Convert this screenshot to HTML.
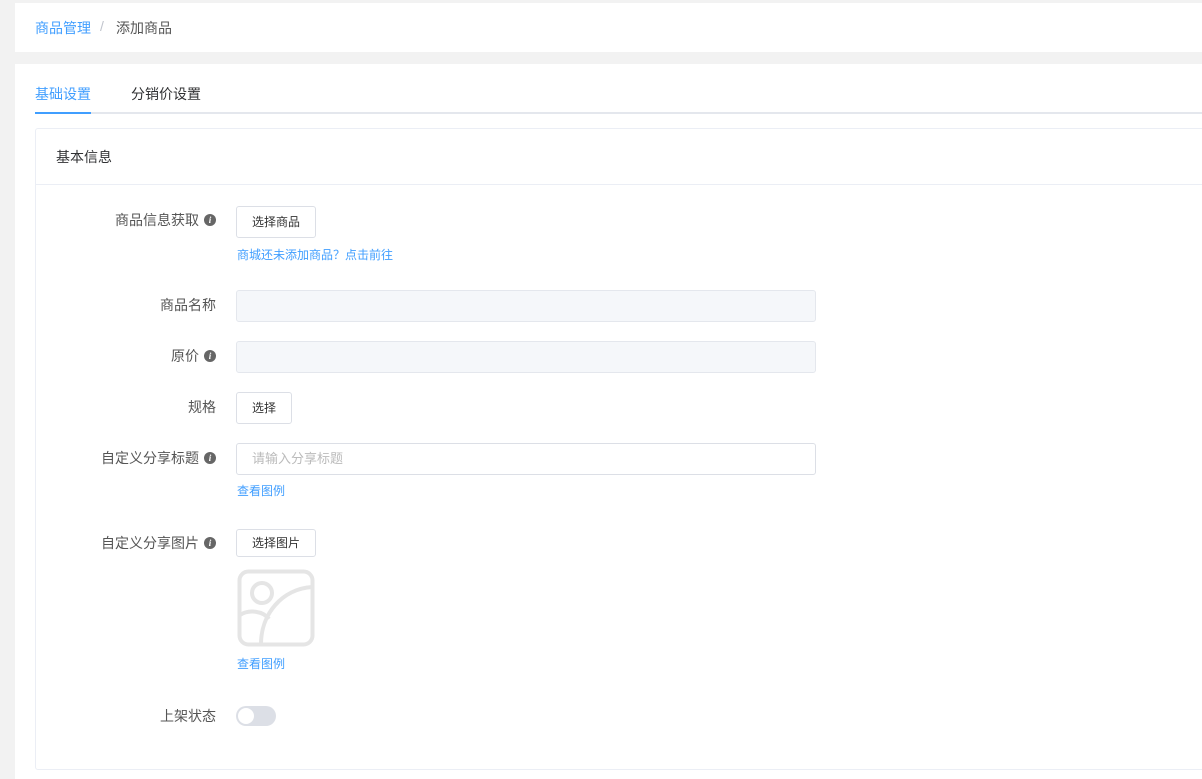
<!DOCTYPE html>
<html><head><meta charset="utf-8"><style>
*{margin:0;padding:0;box-sizing:border-box}
body{width:1202px;height:779px;background:#f2f2f2;font-family:"Liberation Sans","Noto Sans CJK SC",sans-serif;font-size:13px;color:#333;position:relative;overflow:hidden}
.a{position:absolute}
.card{background:#fff}
.lbl{position:absolute;right:986px;font-size:14px;color:#555;white-space:nowrap;display:flex;align-items:center}
.i{display:inline-block;width:12px;height:12px;border-radius:50%;background:#666;color:#fff;font-size:9px;font-weight:bold;font-style:italic;text-align:center;line-height:12px;margin-left:5px;font-family:"Liberation Serif",serif}
.btn{position:absolute;left:236px;border:1px solid #dcdfe6;border-radius:3px;background:#fff;font-size:12px;color:#333;text-align:center}
.inp{position:absolute;left:236px;width:580px;height:32px;border:1px solid #e4e7ed;border-radius:3px;background:#f5f7fa}
.lnk{position:absolute;left:237px;font-size:12px;color:#409eff}
</style></head><body>
<div class="a card" style="left:15px;top:3px;width:1187px;height:49px"></div>
<div class="a" style="left:35px;top:18px;font-size:14px;color:#409eff">商品管理</div>
<div class="a" style="left:100px;top:18px;font-size:14px;color:#c0c4cc">/</div>
<div class="a" style="left:116px;top:18px;font-size:14px;color:#555">添加商品</div>

<div class="a card" style="left:15px;top:64px;width:1187px;height:715px"></div>
<div class="a" style="left:35px;top:84px;font-size:14px;color:#409eff">基础设置</div>
<div class="a" style="left:131px;top:84px;font-size:14px;color:#303133">分销价设置</div>
<div class="a" style="left:35px;top:112px;width:1167px;height:2px;background:#e4e7ed"></div>
<div class="a" style="left:35px;top:112px;width:56px;height:2px;background:#409eff"></div>

<div class="a" style="left:35px;top:128px;width:1180px;height:642px;border:1px solid #ebeef5;border-radius:3px"></div>
<div class="a" style="left:36px;top:184px;width:1166px;height:1px;background:#ebeef5"></div>
<div class="a" style="left:56px;top:147px;font-size:14px;color:#303133">基本信息</div>

<div class="lbl" style="top:210px">商品信息获取<span class="i">i</span></div>
<div class="btn" style="top:206px;width:80px;height:32px;line-height:30px">选择商品</div>
<div class="lnk" style="top:246px">商城还未添加商品？点击前往</div>

<div class="lbl" style="top:295px">商品名称</div>
<div class="inp" style="top:290px"></div>

<div class="lbl" style="top:346px">原价<span class="i">i</span></div>
<div class="inp" style="top:341px"></div>

<div class="lbl" style="top:397px">规格</div>
<div class="btn" style="top:392px;width:56px;height:32px;line-height:30px">选择</div>

<div class="lbl" style="top:448px">自定义分享标题<span class="i">i</span></div>
<div class="inp" style="top:443px;background:#fff;border-color:#dcdfe6;padding-left:15px;line-height:30px;color:#bbb">请输入分享标题</div>
<div class="lnk" style="top:482px">查看图例</div>

<div class="lbl" style="top:533px">自定义分享图片<span class="i">i</span></div>
<div class="btn" style="top:529px;width:80px;height:28px;line-height:26px">选择图片</div>
<svg class="a" style="left:237px;top:569px" width="78" height="78" viewBox="0 0 78 78">
<rect x="2.5" y="2.5" width="73" height="73" rx="9" fill="none" stroke="#e5e5e5" stroke-width="4"/>
<circle cx="25" cy="24" r="10" fill="none" stroke="#e5e5e5" stroke-width="4"/>
<path d="M24 75 C24 45 45 20 75 18" fill="none" stroke="#e5e5e5" stroke-width="4"/>
<path d="M3 46 C12 40 26 42 32 50" fill="none" stroke="#e5e5e5" stroke-width="4"/>
</svg>
<div class="lnk" style="top:655px">查看图例</div>

<div class="lbl" style="top:706px">上架状态</div>
<div class="a" style="left:236px;top:706px;width:40px;height:20px;border-radius:10px;background:#dcdfe6"></div>
<div class="a" style="left:238px;top:708px;width:16px;height:16px;border-radius:50%;background:#fff"></div>
</body></html>
